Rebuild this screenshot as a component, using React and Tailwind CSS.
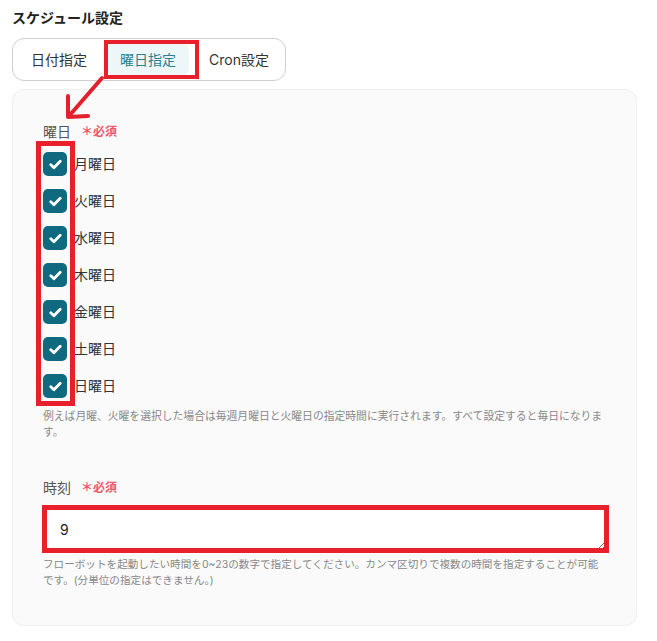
import React from 'react';

const days = ['月曜日', '火曜日', '水曜日', '木曜日', '金曜日', '土曜日', '日曜日'];

function Required() {
  return (
    <span className="ml-[10px] text-[12px] font-bold text-[#f0566a]">＊必須</span>
  );
}

function CheckBox() {
  return (
    <span className="flex h-[24px] w-[24px] items-center justify-center rounded-[5px] bg-[#0f6a80]">
      <svg width="13" height="11" viewBox="0 0 13 11" fill="none">
        <path d="M1.8 5.8 L4.9 8.7 L11.2 2.2" stroke="white" strokeWidth="2.8" strokeLinecap="round" strokeLinejoin="round" />
      </svg>
    </span>
  );
}

export default function App() {
  return (
    <div
      className="relative min-h-[641px] w-[657px] bg-white text-[#333]"
      style={{ fontFamily: 'Inter, "Noto Sans CJK JP", sans-serif' }}
    >
      <div className="px-[12px] pt-[8px]">
        <h2 className="text-[14px] font-bold leading-[20px] text-[#222]">スケジュール設定</h2>

        {/* tabs */}
        <div className="mt-[10px] inline-flex items-center gap-[7px] rounded-[12px] border border-[#cfcfcf] p-[5px] pr-[3px]">
          <button className="rounded-[6px] px-[13px] py-[5px] text-[14px] leading-[21px] text-[#333]">日付指定</button>
          <button className="rounded-[6px] bg-[#eef7f8] px-[13px] py-[5px] text-[14px] leading-[21px] text-[#2d7f8e]">曜日指定</button>
          <button className="rounded-[6px] px-[13px] py-[5px] text-[14px] leading-[21px] text-[#333]">Cron設定</button>
        </div>

        {/* panel */}
        <div className="mt-[8px] w-[625px] rounded-[12px] border border-[#efefef] bg-[#fafafa] px-[30px] pb-[36px] pt-[32px]">
          <div className="flex items-center text-[14px] leading-[20px] text-[#555]">
            曜日
            <Required />
          </div>
          <div className="mt-[10px] flex flex-col gap-[13px]">
            {days.map((d) => (
              <label key={d} className="flex items-center gap-[7px] text-[14px] leading-[24px] text-[#333]">
                <CheckBox />
                {d}
              </label>
            ))}
          </div>
          <p className="mt-[11px] text-[10.8px] leading-[16px] text-[#888]">
            例えば月曜、火曜を選択した場合は毎週月曜日と火曜日の指定時間に実行されます。すべて設定すると毎日になります。
          </p>

          <div className="mt-[37px] flex items-center text-[14px] leading-[20px] text-[#555]">
            時刻
            <Required />
          </div>
          <div className="relative mt-[10px]">
            <textarea
              readOnly
              value="9"
              rows={1}
              className="block h-[44px] w-full resize-y rounded-[4px] border border-[#ddd] bg-white px-[16px] py-[10px] text-[14px] leading-[22px] text-[#222] outline-none"
            />
          </div>
          <p className="mt-[5px] text-[10.6px] leading-[16px] text-[#888]">
            フローボットを起動したい時間を0~23の数字で指定してください。カンマ区切りで複数の時間を指定することが可能です。(分単位の指定はできません。)
          </p>
        </div>
      </div>

      {/* annotations */}
      <div className="pointer-events-none absolute left-[104px] top-[40px] h-[39px] w-[95px] border-[4px] border-[#e8202b]" />
      <div className="pointer-events-none absolute left-[36px] top-[141px] h-[265px] w-[39px] border-[5px] border-[#e8202b]" />
      <div className="pointer-events-none absolute left-[42px] top-[505px] h-[48px] w-[567px] border-[5px] border-[#e8202b]" />
      <svg className="pointer-events-none absolute left-[60px] top-[72px]" width="50" height="52" viewBox="0 0 50 52" fill="none">
        <path d="M42 6 L9 44" stroke="#e3202e" strokeWidth="4" strokeLinecap="round" />
        <path d="M8 24 L8 45 L28 44" stroke="#e3202e" strokeWidth="4" strokeLinecap="round" strokeLinejoin="round" />
      </svg>
    </div>
  );
}
